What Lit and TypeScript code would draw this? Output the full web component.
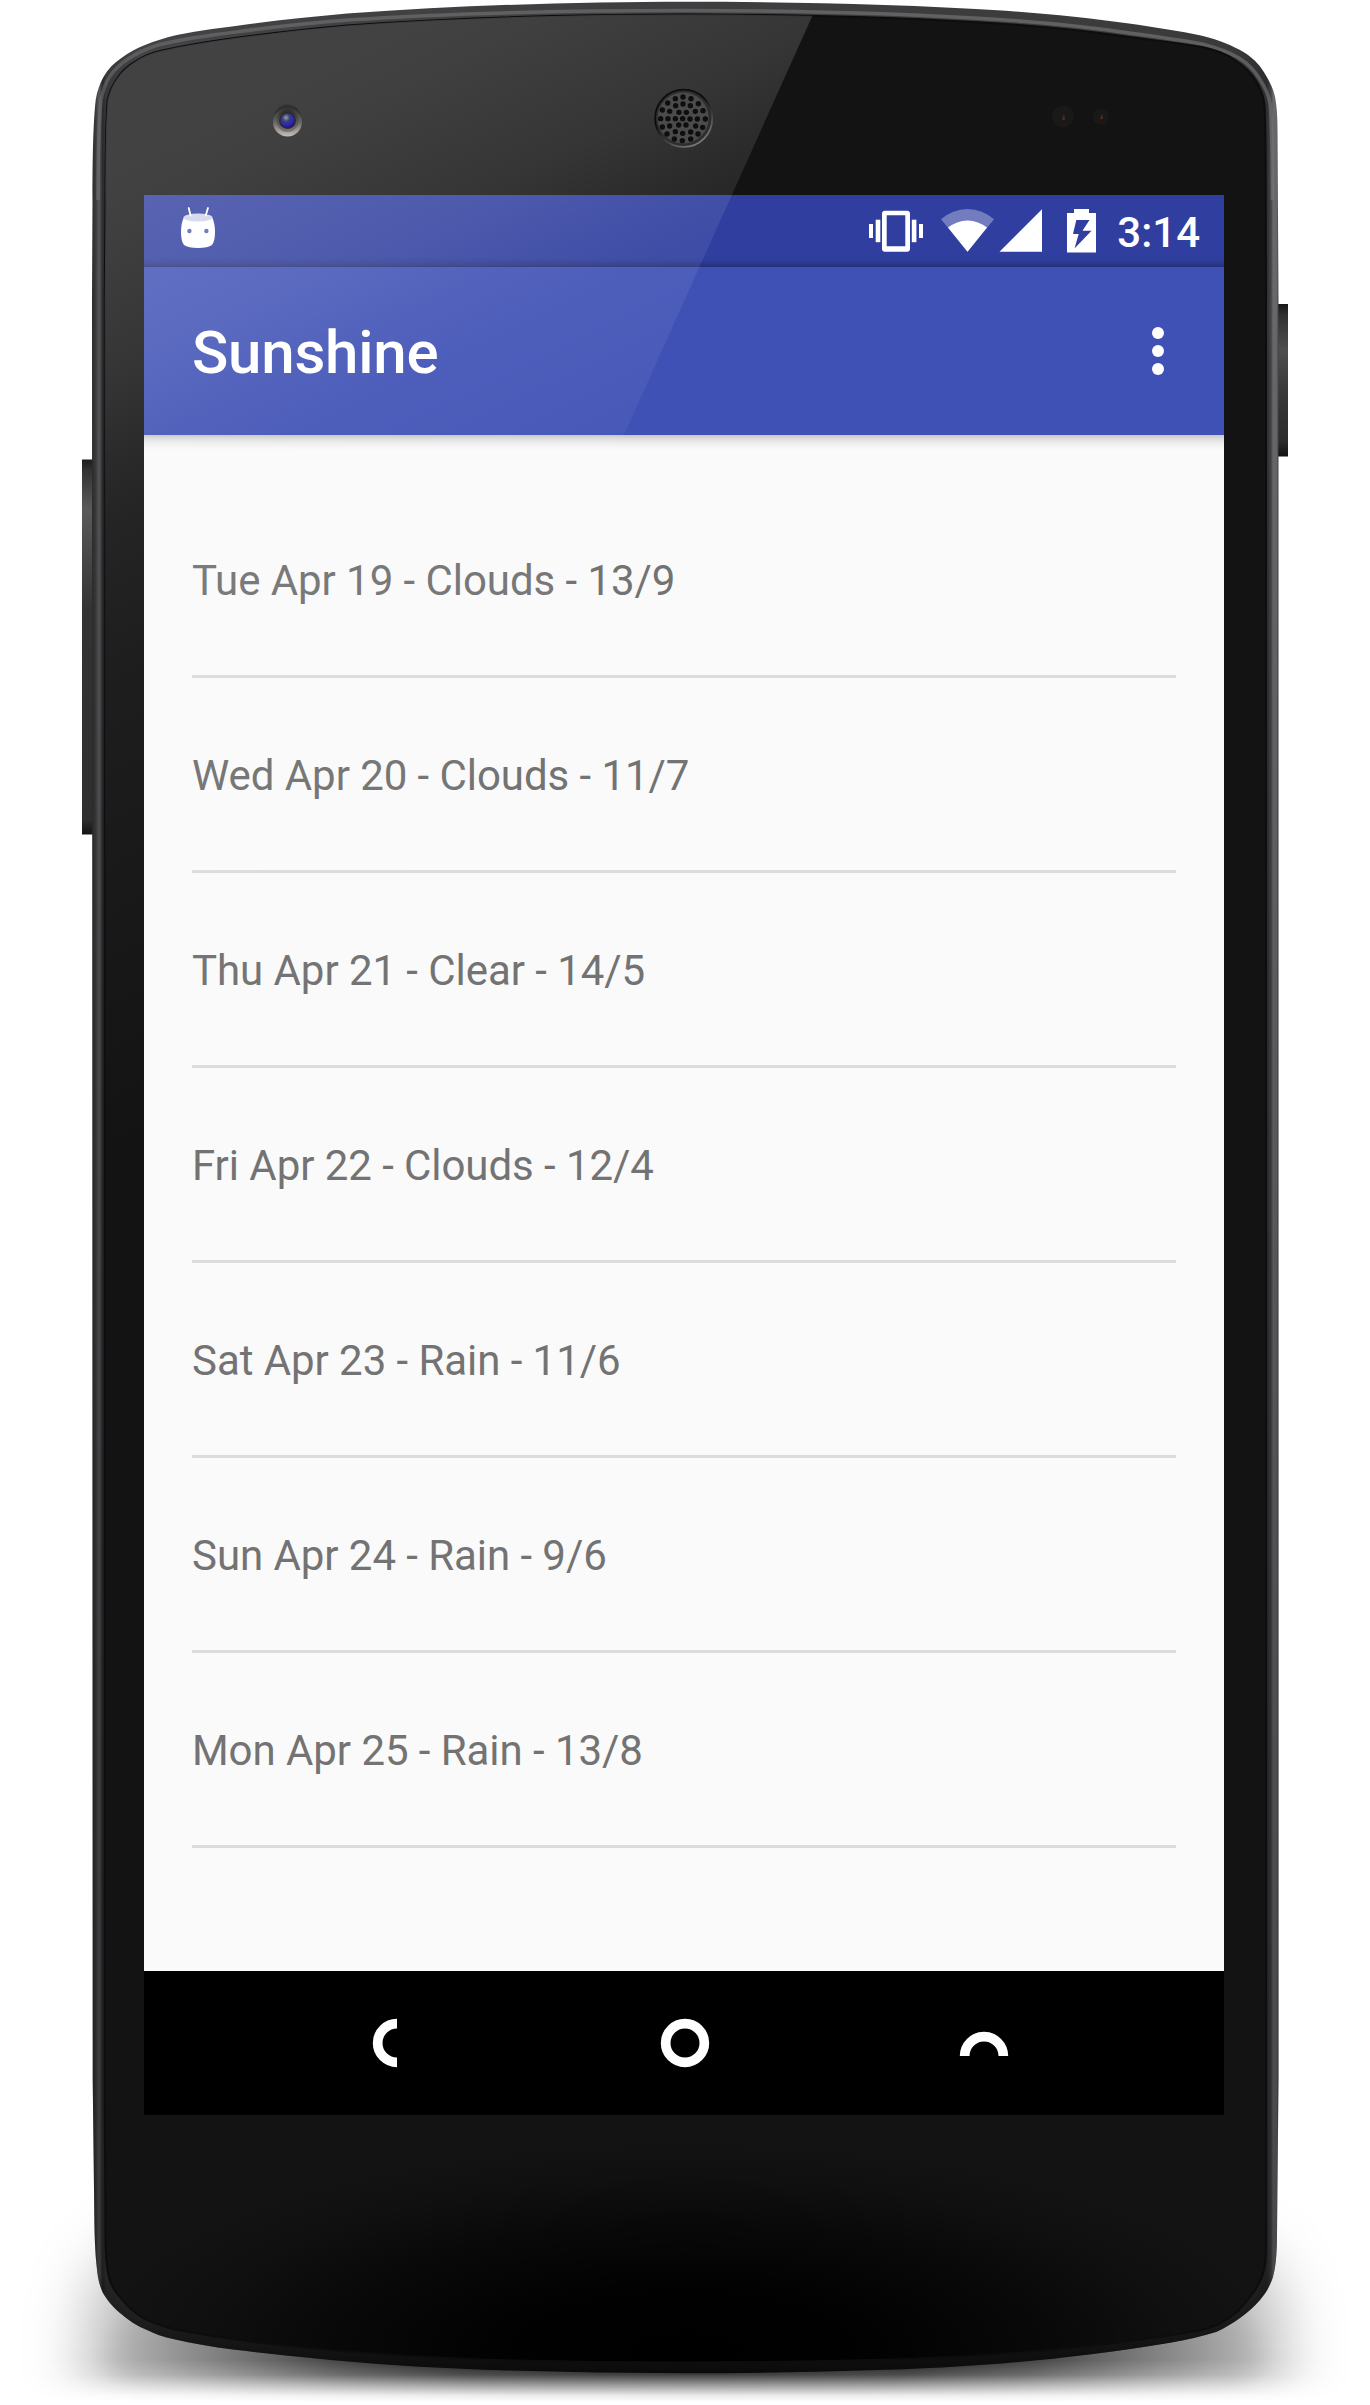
import { LitElement, html, svg, css } from "lit";
import { customElement, property } from "lit/decorators.js";

const BODY =
  "M92 300 L92.5 200 C92.5 150 93.500 120 95.700 100 C97 91 100 83 103.600 76.700 C108 69 114 63 121.400 58 C129 52.500 137 48 145 45 C155 41 166 37.500 176.800 35 C200 30.500 224 27.500 248 24.300 C281 19.500 314 16.500 347 13.5 C465 5 584 1.7 685 1.7 C790 1.7 900 4 1006 10.7 C1050 14 1090 18 1129 23.5 C1153 27 1180 31 1202 35.700 C1220 40 1233 46 1243 51.700 C1252 57 1259 64 1263.700 71.700 C1269 80 1273 88 1275 96.700 C1277 107 1277.5 118 1277.5 133 L1278.5 300 L1278.5 2080 L1276.900 2245 C1276.500 2257 1275.500 2268 1273 2277 C1270 2286 1266 2293 1260 2300 C1254 2307 1247 2313 1240 2318 C1233 2323 1225 2328 1216.700 2331.700 C1202 2336.500 1186 2340 1170 2342.7 C1060 2361 960 2368 870 2370.3 Q685 2376 500 2370.3 C400 2367 330 2361 233 2349.5 C213 2347 193 2343.500 173 2339 C163 2337 155 2334 147 2330 C137 2326 128 2320 120 2313 C112 2306 107 2300 103 2293 C99 2285 97.500 2276 96.700 2266.700 C95 2250 94.500 2235 94.300 2215 L92.7 2080 Z";
const GLASS =
  "M104.7 300 L105.5 200 C105.5 150 105.800 125 107.600 100 C109.500 92 113 84 117.500 78 C122 71 128 66 135 61.700 C142 57 151 53 161 50.700 C183 46 205 42 228 39 C268 33.500 307 29 347 25.5 C465 17 584 14.6 685 14.6 C790 14.6 900 17 1006 24 C1050 27 1090 31 1129 37 C1155 40.500 1180 43 1202 47 C1217 50 1228 55 1235 60 C1244 66 1251 73 1255.500 80 C1260.500 88 1264 97 1264.500 106.700 C1265.500 120 1265.700 150 1265.700 200 L1266 300 L1266 2080 L1266 2245 C1266 2255 1265.500 2263 1264 2270 C1262 2279 1258 2286 1253 2293 C1248 2300 1243 2306 1237 2312 C1231 2317 1225 2321 1217 2325 C1208 2328.500 1200 2330.500 1190 2332 C1172 2335 1155 2337.500 1137 2340 C1050 2352 960 2358 870 2360 Q685 2365 500 2360 C400 2357 330 2351 267 2343.5 C235 2340 203 2335 173 2329 C162 2326 152 2323 143 2318 C134 2313 127 2306 120 2297 C113 2290 109.500 2282 108 2273 C106 2262 105.500 2250 105.500 2240 L104.7 2080 Z";

const HOLES: [number, number][] = [
  [114, 51], [138, 56], [91, 56], [68, 69], [160, 71], [92, 77], [114, 72], [136, 77],
  [52, 90], [74, 94], [102, 97], [124, 97], [151, 94], [174, 92],
  [47, 116], [69, 116], [91, 116], [113, 116], [135, 117], [157, 117], [181, 117],
  [52, 141], [74, 138], [101, 135], [123, 135], [152, 138], [173, 142],
  [91, 155], [113, 160], [137, 156], [66, 162], [159, 162], [88, 177], [112, 182], [137, 177],
];

@customElement("device-shell")
export class DeviceShell extends LitElement {
  static styles = css`
    :host { display: block; }
    svg { display: block; }
  `;
  render() {
    return html`<svg width="1370" height="2405" viewBox="0 0 1370 2405" aria-hidden="true">
      <defs>
        <linearGradient id="rim" gradientUnits="userSpaceOnUse" x1="92" y1="0" x2="1279" y2="0">
          <stop offset="0" stop-color="#2b2b2d" />
          <stop offset=".003" stop-color="#3a3a3c" />
          <stop offset=".006" stop-color="#58585b" />
          <stop offset=".009" stop-color="#2a2a2c" />
          <stop offset=".012" stop-color="#38383a" />
          <stop offset=".04" stop-color="#434345" />
          <stop offset=".96" stop-color="#3a3a3b" />
          <stop offset=".99" stop-color="#2e2e30" />
          <stop offset=".9935" stop-color="#47474a" />
          <stop offset=".995" stop-color="#69696d" />
          <stop offset=".998" stop-color="#66666a" />
          <stop offset="1" stop-color="#3a3a3c" />
        </linearGradient>
        <linearGradient id="rimFade" gradientUnits="userSpaceOnUse" x1="0" y1="300" x2="0" y2="2376">
          <stop offset="0" stop-color="#000" stop-opacity="0" />
          <stop offset=".7" stop-color="#000" stop-opacity=".25" />
          <stop offset=".95" stop-color="#000" stop-opacity=".3" />
          <stop offset="1" stop-color="#000" stop-opacity=".85" />
        </linearGradient>
        <linearGradient id="topEdge" gradientUnits="userSpaceOnUse" x1="100" y1="0" x2="1270" y2="0">
          <stop offset="0" stop-color="#77777a" stop-opacity=".5" />
          <stop offset=".5" stop-color="#5e5e60" />
          <stop offset="1" stop-color="#77777a" stop-opacity=".6" />
        </linearGradient>
        <radialGradient id="chin" gradientUnits="userSpaceOnUse" cx="0" cy="0" r="1"
          gradientTransform="translate(685 2350) scale(600 210)">
          <stop offset="0" stop-color="#000" />
          <stop offset=".3" stop-color="#000" stop-opacity=".92" />
          <stop offset=".6" stop-color="#000" stop-opacity=".55" />
          <stop offset=".82" stop-color="#000" stop-opacity=".18" />
          <stop offset="1" stop-color="#000" stop-opacity="0" />
        </radialGradient>
        <radialGradient id="ground" gradientUnits="userSpaceOnUse" cx="0" cy="0" r="1"
          gradientTransform="translate(685 2352) scale(590 150)">
          <stop offset="0" stop-color="#000" stop-opacity=".95" />
          <stop offset=".4" stop-color="#000" stop-opacity=".82" />
          <stop offset=".6" stop-color="#000" stop-opacity=".6" />
          <stop offset=".78" stop-color="#000" stop-opacity=".3" />
          <stop offset=".9" stop-color="#000" stop-opacity=".1" />
          <stop offset="1" stop-color="#000" stop-opacity="0" />
        </radialGradient>
        <filter id="haze" filterUnits="userSpaceOnUse" x="-60" y="2100" width="1490" height="480">
          <feGaussianBlur stdDeviation="32 34" />
        </filter>
        <linearGradient id="groundFade" gradientUnits="userSpaceOnUse" x1="0" y1="2360" x2="0" y2="2402">
          <stop offset="0" stop-color="#fff" />
          <stop offset=".35" stop-color="#ccc" />
          <stop offset=".62" stop-color="#666" />
          <stop offset=".85" stop-color="#161616" />
          <stop offset="1" stop-color="#000" />
        </linearGradient>
        <mask id="groundMask" maskUnits="userSpaceOnUse" x="0" y="2100" width="1370" height="305">
          <rect x="0" y="2100" width="1370" height="305" fill="url(#groundFade)" />
        </mask>
        <linearGradient id="keyL" x1="0" y1="0" x2="0" y2="1">
          <stop offset="0" stop-color="#1c1c1c" />
          <stop offset=".03" stop-color="#333" />
          <stop offset=".13" stop-color="#5a5a5a" />
          <stop offset=".4" stop-color="#333" />
          <stop offset=".96" stop-color="#2e2e2e" />
          <stop offset="1" stop-color="#141414" />
        </linearGradient>
        <linearGradient id="keyR" x1="0" y1="0" x2="0" y2="1">
          <stop offset="0" stop-color="#161616" />
          <stop offset=".07" stop-color="#303030" />
          <stop offset=".3" stop-color="#4e4e4e" />
          <stop offset=".65" stop-color="#343434" />
          <stop offset=".9" stop-color="#2c2c2c" />
          <stop offset="1" stop-color="#111" />
        </linearGradient>
      </defs>
      <g mask="url(#groundMask)">
        <rect x="92" y="2255" width="1186" height="220" rx="60" fill="#000" fill-opacity=".3" filter="url(#haze)" />
        <rect x="0" y="2150" width="1370" height="255" fill="url(#ground)" />
      </g>
      <rect x="82" y="459.500" width="12" height="375" fill="url(#keyL)" />
      <rect x="1276" y="304" width="12" height="152.500" fill="url(#keyR)" />
      <path d=${BODY} fill="url(#rim)" />
      <path d=${BODY} fill="url(#rimFade)" />
      <path d="M98 200 C98 150 99 120 101 100 C103 90 106 82 110 76 C115 69 121 63.500 128 59 C137 53 147 48.500 158 45 C180 39.500 215 34.500 240 31.500 C276 26.500 311 23 347 20 C465 12 584 10.500 685 10.500 C790 10.500 900 13 1006 20 C1050 23 1090 27 1129 33 C1155 36.500 1180 40 1202 44 C1218 48 1230 53 1239 58 C1247 63 1254 70 1259 78 C1265 87 1269 96 1270 104 C1272 118 1272 140 1272.500 200"
        fill="none" stroke="url(#topEdge)" stroke-width="3.500" />
      <path d=${GLASS} fill="#131313" />
      <path d=${GLASS} fill="url(#chin)" />
      <path d=${GLASS} fill="none" stroke="#0d0d0e" stroke-width="2" />
      <circle cx="1063" cy="116.500" r="11" fill="#1a1919" />
      <path d="M1062 120 l2 -6 1 6z" fill="#5a2c18" />
      <circle cx="1101" cy="117" r="8" fill="#1a1919" />
      <path d="M1100 119 l2 -5 1 5z" fill="#5a2c18" />
    </svg>`;
  }
}

@customElement("device-gloss")
export class DeviceGloss extends LitElement {
  static styles = css`
    :host { display: block; }
    svg { display: block; }
  `;
  render() {
    return html`<svg width="1370" height="2405" viewBox="0 0 1370 2405" aria-hidden="true">
      <defs>
        <linearGradient id="gloss" gradientUnits="userSpaceOnUse" x1="0" y1="0" x2="479" y2="990">
          <stop offset=".18" stop-color="#fff" stop-opacity=".2" />
          <stop offset=".23" stop-color="#fff" stop-opacity=".19" />
          <stop offset=".35" stop-color="#fff" stop-opacity=".145" />
          <stop offset=".42" stop-color="#fff" stop-opacity=".1" />
          <stop offset=".47" stop-color="#fff" stop-opacity=".075" />
          <stop offset=".6" stop-color="#fff" stop-opacity=".045" />
          <stop offset="1" stop-color="#fff" stop-opacity="0" />
        </linearGradient>
        <clipPath id="glassClip"><path d=${GLASS} /></clipPath>
        <linearGradient id="camRing" x1="0" y1="0" x2="0" y2="1">
          <stop offset="0" stop-color="#303030" />
          <stop offset=".5" stop-color="#686663" />
          <stop offset="1" stop-color="#c4c1bd" />
        </linearGradient>
        <linearGradient id="camInner" x1="0" y1="0" x2="0" y2="1">
          <stop offset="0" stop-color="#2c2b2a" />
          <stop offset="1" stop-color="#7d7975" />
        </linearGradient>
        <linearGradient id="spkRing" x1=".2" y1="0" x2=".8" y2="1">
          <stop offset=".4" stop-color="#0c0c0c" />
          <stop offset="1" stop-color="#858585" />
        </linearGradient>
        <radialGradient id="lens" cx=".4" cy=".3" r=".75">
          <stop offset="0" stop-color="#9aa0b4" />
          <stop offset=".35" stop-color="#3c4270" />
          <stop offset=".75" stop-color="#2a20c4" />
          <stop offset="1" stop-color="#1a1550" />
        </radialGradient>
      </defs>
      <polygon points="100,0 819.500,0 100,1600" fill="url(#gloss)" clip-path="url(#glassClip)" />
      <circle cx="287.500" cy="118" r="13.500" fill="#303030" />
      <circle cx="287.500" cy="122" r="14.500" fill="url(#camRing)" />
      <circle cx="287.500" cy="121" r="11" fill="url(#camInner)" />
      <circle cx="287.500" cy="120.500" r="8.500" fill="#2b2a2e" />
      <circle cx="287.500" cy="120.500" r="7" fill="url(#lens)" />
      <circle cx="683.700" cy="118.300" r="28.600" fill="#2e2e2e" stroke="url(#spkRing)" stroke-width="1.800" />
      <circle cx="683.200" cy="118" r="25.500" fill="#4b4b4b" />
      ${HOLES.map(([x, y]) => svg`<circle cx=${645 + x / 3} cy=${80 + y / 3} r="2.700" fill="#0e0e0e" />`)}
    </svg>`;
  }
}

@customElement("status-bar")
export class StatusBar extends LitElement {
  @property() time = "";
  static styles = css`
    :host {
      display: flex;
      align-items: center;
      height: 72px;
      box-sizing: border-box;
      padding: 0 24px 0 36px;
      background: linear-gradient(rgba(0, 0, 0, 0) 62px, rgba(0, 0, 0, 0.07) 67px, rgba(0, 0, 0, 0.24) 72px), #303f9f;
      color: #fff;
    }
    svg { display: block; flex: none; fill: #fff; }
    .spacer { flex: 1; }
    .wifi { margin-left: 18px; }
    .signal { margin-left: 5px; }
    .battery { margin-left: 25px; }
    .clock { width: 104px; text-align: right; font-weight: 500; font-size: 42px; line-height: 50px; padding-top: 3px; }
  `;
  render() {
    return html`
      <svg width="36" height="48" viewBox="180 207 36 48">
        <path d="M184 217 C182 221 181 226 181 232 C181 238 182 242.500 184 245 Q188 248 198 248 Q208 248 212 245 C214 242.500 215 238 215 232 C215 226 214 221 212 217 Z" />
        <ellipse cx="198" cy="217.500" rx="14.500" ry="4" fill="#d0d3ea" />
        <path d="M188.700 208 L190.600 215.500 M208 208 L205.700 215.500" stroke="#fff" stroke-width="1.800" stroke-linecap="round" />
        <circle cx="189.400" cy="231" r="2.200" fill="#5561b0" /><circle cx="206.400" cy="231" r="2.200" fill="#5561b0" />
      </svg>
      <span class="spacer"></span>
      <svg width="54" height="48" viewBox="869 207 54 48">
        <rect x="869" y="224" width="4" height="14" /><rect x="875.700" y="219.700" width="4.600" height="22.500" />
        <path fill-rule="evenodd" d="M885 210.700 h22 a3 3 0 0 1 3 3 v35 a3 3 0 0 1 -3 3 h-22 a3 3 0 0 1 -3 -3 v-35 a3 3 0 0 1 3 -3z M886.700 215.200 v31 h18.600 v-31z" />
        <rect x="911.800" y="219.700" width="4.600" height="22.500" /><rect x="919" y="224" width="4" height="14" />
      </svg>
      <svg class="wifi" width="53" height="48" viewBox="941 207 53 48">
        <path opacity=".32" d="M967.500 251.700 L941 219.300 A39.200 39.200 0 0 1 994 219.300 Z" />
        <path d="M967.500 251.700 L948 227.600 A30.600 30.600 0 0 1 987 227.600 Z" />
      </svg>
      <svg class="signal" width="43" height="48" viewBox="999 207 43 48">
        <path d="M999.500 251.800 H1042 V209.300 Z" />
      </svg>
      <svg class="battery" width="29" height="48" viewBox="1067 207 29 48">
        <path fill-rule="evenodd" d="M1067 213 h7 v-4 h15 v4 h7 v39.600 h-29z M1076.300 220 L1073 234 H1078.700 L1074.500 248.500 L1091.500 230.700 H1082.500 L1089.500 220 Z" />
      </svg>
      <div class="clock">${this.time}</div>
    `;
  }
}

@customElement("app-bar")
export class AppBar extends LitElement {
  @property() heading = "";
  static styles = css`
    :host {
      display: flex;
      align-items: center;
      justify-content: space-between;
      height: 168px;
      box-sizing: border-box;
      padding: 0 60px 0 48px;
      background: #3f51b5;
      color: #fff;
    }
    .heading { font-size: 60px; font-weight: 500; line-height: 70px; padding-top: 4px; letter-spacing: -0.22px; }
    svg { display: block; fill: #fff; }
  `;
  render() {
    return html`
      <div class="heading">${this.heading}</div>
      <svg width="12" height="48" viewBox="0 0 12 48">
        <circle cx="6" cy="6" r="6" /><circle cx="6" cy="24" r="6" /><circle cx="6" cy="42" r="6" />
      </svg>
    `;
  }
}

@customElement("forecast-list")
export class ForecastList extends LitElement {
  @property({ attribute: false }) items: string[] = [];
  static styles = css`
    :host {
      display: block;
      flex: 1;
      padding: 48px;
      background: linear-gradient(#c6c6c6 0, #dedede 4px, #f0f0f0 9px, #fafafa 15px);
    }
    .row {
      display: flex;
      align-items: center;
      height: 195px;
      box-sizing: border-box;
      padding-top: 3px;
      border-bottom: 3px solid #dcdcdc;
      color: #737373;
      font-size: 42px;
      line-height: 50px;
      letter-spacing: -0.06px;
    }
  `;
  render() {
    return this.items.map((item) => html`<div class="row">${item}</div>`);
  }
}

@customElement("nav-bar")
export class NavBar extends LitElement {
  static styles = css`
    :host {
      display: grid;
      grid-template-columns: 300px 290px 50px;
      justify-content: start;
      align-items: center;
      height: 144px;
      box-sizing: border-box;
      padding-left: 228px;
      background: #000;
    }
    svg { display: block; fill: none; stroke: #fff; stroke-width: 9.7px; }
    .home { margin-left: -12px; }
    .recents { margin-left: -3px; }
  `;
  render() {
    return html`
      <svg class="back" width="50" height="50" viewBox="0 0 50 50"><path d="M25 5.650 A19.350 19.350 0 0 0 25 44.350" /></svg>
      <svg class="home" width="50" height="50" viewBox="0 0 50 50"><circle cx="25" cy="25" r="19.350" /></svg>
      <svg class="recents" width="50" height="50" viewBox="0 0 50 50"><path d="M5.650 38 A19.350 19.350 0 0 1 44.350 38" /></svg>
    `;
  }
}

@customElement("app-root")
export class AppRoot extends LitElement {
  private forecast = [
    "Tue Apr 19 - Clouds - 13/9",
    "Wed Apr 20 - Clouds - 11/7",
    "Thu Apr 21 - Clear - 14/5",
    "Fri Apr 22 - Clouds - 12/4",
    "Sat Apr 23 - Rain - 11/6",
    "Sun Apr 24 - Rain - 9/6",
    "Mon Apr 25 - Rain - 13/8",
  ];
  static styles = css`
    :host {
      display: block;
      position: relative;
      width: 1370px;
      height: 2405px;
      box-sizing: border-box;
      padding: 195px 146px 290px 144px;
      background: #fff;
      overflow: hidden;
      font-family: Roboto, "Liberation Sans", sans-serif;
    }
    .shell, .gloss { position: absolute; left: 0; top: 0; }
    .gloss { pointer-events: none; }
    .screen { position: relative; display: flex; flex-direction: column; height: 1920px; }
  `;
  render() {
    return html`
      <device-shell class="shell"></device-shell>
      <main class="screen">
        <status-bar time="3:14"></status-bar>
        <app-bar heading="Sunshine"></app-bar>
        <forecast-list .items=${this.forecast}></forecast-list>
        <nav-bar></nav-bar>
      </main>
      <device-gloss class="gloss"></device-gloss>
    `;
  }
}
